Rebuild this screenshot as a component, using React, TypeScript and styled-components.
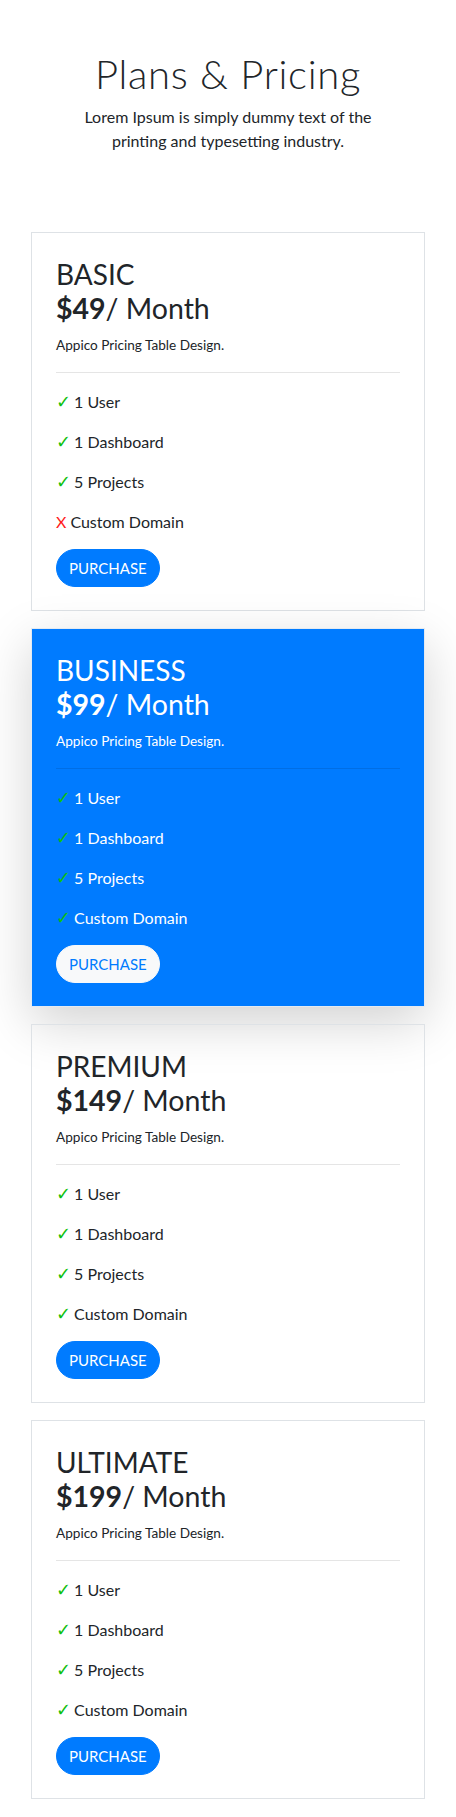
import React from "react";
import styled, { createGlobalStyle, css } from "styled-components";

const Global = createGlobalStyle`
  html, body { margin: 0; padding: 0; background: #fff; }
  body {
    font-family: Lato, "Noto Sans", sans-serif;
    color: #212529;
    -webkit-font-smoothing: antialiased;
  }
  * { box-sizing: border-box; }
`;

const Page = styled.main`
  padding: 50px 31px 17px;
`;

const Header = styled.header`
  display: flex;
  flex-direction: column;
  align-items: center;
  text-align: center;
  margin-bottom: 79px;
`;

const Title = styled.h1`
  margin: 0 0 7px;
  font-size: 40px;
  line-height: 48px;
  font-weight: 300;
  letter-spacing: 0.7px;
`;

const Lead = styled.p`
  margin: 0;
  max-width: 300px;
  font-size: 16px;
  line-height: 24px;
  font-weight: 400;
`;

const CardList = styled.section`
  display: flex;
  flex-direction: column;
  gap: 17px;
`;

const Card = styled.article<{ $featured?: boolean }>`
  border: 1px solid #dee2e6;
  padding: 24px 24px 23px;
  display: flex;
  flex-direction: column;
  align-items: flex-start;
  ${(p) =>
    p.$featured &&
    css`
      background: #007bff;
      color: #fff;
      border-color: #e3eaf2;
      box-shadow: 0 16px 48px rgba(0, 0, 0, 0.175);
    `}
`;

const PlanName = styled.h3`
  margin: 0;
  font-size: 28px;
  line-height: 34px;
  font-weight: 400;
`;

const Price = styled.h2`
  margin: 0;
  font-size: 28.5px;
  line-height: 34px;
  font-weight: 400;
  b { font-weight: 700; }
`;

const Tagline = styled.p`
  margin: 10px 0 0;
  font-size: 13.6px;
  line-height: 21px;
`;

const Divider = styled.hr`
  align-self: stretch;
  margin: 16px 0 17px;
  border: 0;
  border-top: 1px solid rgba(0, 0, 0, 0.1);
  height: 0;
`;

const Features = styled.ul`
  list-style: none;
  margin: 0;
  padding: 0;
  display: flex;
  flex-direction: column;
  gap: 16px;
`;

const Feature = styled.li`
  font-size: 16px;
  line-height: 24px;
  height: 24px;
`;

const Mark = styled.span<{ $ok: boolean }>`
  color: ${(p) => (p.$ok ? "#0fbf0f" : "#ff1a1a")};
  margin-right: 4px;
  line-height: 1;
  ${(p) =>
    p.$ok &&
    css`
      font-family: "DejaVu Sans", sans-serif;
      font-weight: 700;
      font-size: 18px;
      margin-right: 3px;
    `}
`;

const Button = styled.button<{ $light?: boolean }>`
  margin-top: 15px;
  height: 38px;
  padding: 0 12px;
  border-radius: 19px;
  border: 1px solid #007bff;
  background: #007bff;
  color: #fff;
  font-family: inherit;
  font-size: 15px;
  font-weight: 400;
  line-height: 24px;
  cursor: pointer;
  ${(p) =>
    p.$light &&
    css`
      background: #f8f9fa;
      border-color: #f8f9fa;
      color: #007bff;
    `}
`;

type Plan = {
  name: string;
  price: string;
  featured?: boolean;
  domain: boolean;
};

const plans: Plan[] = [
  { name: "BASIC", price: "$49", domain: false },
  { name: "BUSINESS", price: "$99", domain: true, featured: true },
  { name: "PREMIUM", price: "$149", domain: true },
  { name: "ULTIMATE", price: "$199", domain: true },
];

export default function App() {
  return (
    <>
      <Global />
      <Page>
        <Header>
          <Title>Plans &amp; Pricing</Title>
          <Lead>
            Lorem Ipsum is simply dummy text of the printing and typesetting
            industry.
          </Lead>
        </Header>
        <CardList>
          {plans.map((p) => {
            const feats: [boolean, string][] = [
              [true, "1 User"],
              [true, "1 Dashboard"],
              [true, "5 Projects"],
              [p.domain, "Custom Domain"],
            ];
            return (
              <Card key={p.name} $featured={p.featured}>
                <PlanName>{p.name}</PlanName>
                <Price>
                  <b>{p.price}</b>/ Month
                </Price>
                <Tagline>Appico Pricing Table Design.</Tagline>
                <Divider />
                <Features>
                  {feats.map(([ok, label]) => (
                    <Feature key={label}>
                      <Mark $ok={ok}>{ok ? "✓" : "X"}</Mark>
                      {label}
                    </Feature>
                  ))}
                </Features>
                <Button $light={p.featured}>PURCHASE</Button>
              </Card>
            );
          })}
        </CardList>
      </Page>
    </>
  );
}
